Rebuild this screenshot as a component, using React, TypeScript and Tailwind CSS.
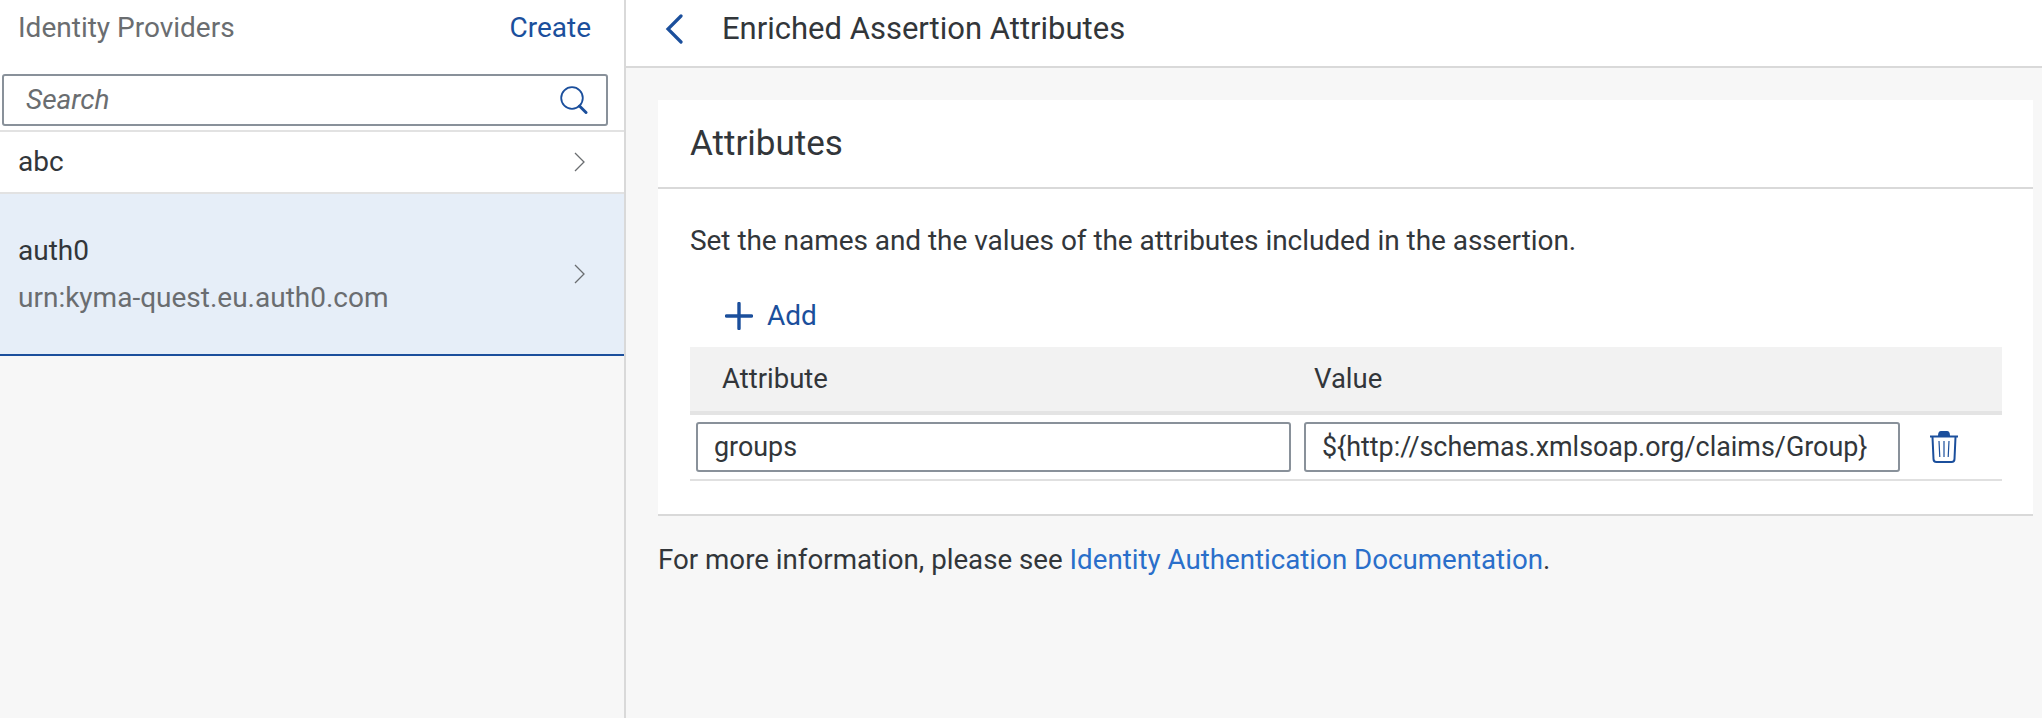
const SearchIcon = () => (
  <svg width="28" height="28" viewBox="0 0 28 28" fill="none" stroke="#1b4f9c">
    <circle cx="12" cy="12" r="10.8" strokeWidth="1.8" />
    <path d="M19.5 20l6.5 6.5" strokeWidth="3" strokeLinecap="round" />
  </svg>
)

const Chevron = () => (
  <svg width="11" height="20" viewBox="0 0 11 20" fill="none" stroke="#6a6d70" strokeWidth="1.3">
    <path d="M1 1l9 9-9 9" />
  </svg>
)

const BackIcon = () => (
  <svg width="18" height="30" viewBox="0 0 18 30" fill="none" stroke="#1b4f9c" strokeWidth="3.2" strokeLinecap="round">
    <path d="M16 2L3 15l13 13" />
  </svg>
)

const PlusIcon = () => (
  <svg width="28" height="28" viewBox="0 0 28 28" fill="none" stroke="#1b4f9c" strokeWidth="3.4" strokeLinecap="round">
    <path d="M14 1.5v25M1.5 14h25" />
  </svg>
)

const TrashIcon = () => (
  <svg width="30" height="32" viewBox="0 0 30 32" fill="none" stroke="#1b4f9c">
    <path d="M1 5.5h28" strokeWidth="2" />
    <path d="M10 5c0-3 1-4 2-4h6c1 0 2 1 2 4" strokeWidth="2" fill="#1b4f9c" />
    <path d="M3.5 6l1 22c0 2 1 3 3 3h15c2 0 3-1 3-3l1-22" strokeWidth="2" />
    <path d="M10 10l.8 16M15 10v16M20 10l-.8 16" strokeWidth="1.2" />
  </svg>
)

const TextBox = ({ value, className }: { value: string; className: string }) => (
  <div
    className={`flex h-[50px] items-center rounded-[3px] border-2 border-[#89919a] bg-white pl-[16px] text-[26.9px] text-[#32363a] ${className}`}
  >
    {value}
  </div>
)

export default function App() {
  return (
    <div className="flex h-[718px] w-[2042px] bg-[#f7f7f7] font-['Roboto',sans-serif] text-[28px] leading-[36px] text-[#32363a]">
      <aside className="h-full w-[626px] shrink-0 border-r-2 border-[#d9d9d9]">
        <div className="h-[132px] border-b-2 border-[#e2e2e2] bg-white pr-[16px]">
          <div className="flex h-[74px] items-center justify-between pb-[18px] pl-[18px] pr-[17px]">
            <span className="text-[#6a6d70]">Identity Providers</span>
            <span className="text-[#1b4f9c]">Create</span>
          </div>
          <div className="ml-[2px] flex h-[52px] items-center justify-between rounded-[3px] border-2 border-[#89919a] bg-white pl-[22px] pr-[18px]">
            <span className="italic text-[#6a6d70]">Search</span>
            <SearchIcon />
          </div>
        </div>

        <div className="flex h-[62px] items-center justify-between border-b-2 border-[#e2e2e2] bg-white pl-[18px] pr-[39px]">
          <span>abc</span>
          <Chevron />
        </div>

        <div className="flex h-[162px] items-center justify-between border-b-2 border-[#1b4f9c] bg-[#e6eef8] pl-[18px] pr-[39px]">
          <div className="flex flex-col gap-[11px]">
            <span>auth0</span>
            <span className="text-[#6a6d70]">urn:kyma-quest.eu.auth0.com</span>
          </div>
          <Chevron />
        </div>
      </aside>

      <main className="min-w-0 flex-1">
        <header className="flex h-[68px] items-center gap-[38px] border-b-2 border-[#d9d9d9] bg-white pb-[8px] pl-[39px]">
          <BackIcon />
          <h1 className="ml-[1px] text-[31px] text-[#32363a]">Enriched Assertion Attributes</h1>
        </header>

        <div className="ml-[32px] mr-[9px] mt-[32px]">
          <section className="h-[416px] border-b-2 border-[#d9d9d9] bg-white">
            <div className="flex h-[89px] items-center border-b-2 border-[#d9d9d9] pl-[32px]">
              <h2 className="text-[35px]">Attributes</h2>
            </div>

            <div className="pl-[32px] pr-[31px]">
              <p className="pt-[34px] tracking-[-0.05px]">Set the names and the values of the attributes included in the assertion.</p>

              <div className="mt-[39px] flex items-center gap-[14px] pl-[35px] text-[#1b4f9c]">
                <PlusIcon />
                <span>Add</span>
              </div>

              <div className="mt-[13px]">
                <div className="flex h-[68px] items-center border-b-4 border-[#e4e4e4] bg-[#f2f2f2] pl-[32px] text-[27.5px]">
                  <span className="w-[592px]">Attribute</span>
                  <span>Value</span>
                </div>
                <div className="flex h-[66px] items-center border-b-2 border-[#e0e0e0] pb-[1px] pl-[6px]">
                  <TextBox value="groups" className="w-[595px]" />
                  <TextBox value="${http://schemas.xmlsoap.org/claims/Group}" className="ml-[13px] w-[596px]" />
                  <div className="ml-[29px]">
                    <TrashIcon />
                  </div>
                </div>
              </div>
            </div>
          </section>

          <p className="mt-[26px] text-[27.7px]">
            For more information, please see{' '}
            <span className="text-[#2a6fca]">Identity Authentication Documentation</span>.
          </p>
        </div>
      </main>
    </div>
  )
}
